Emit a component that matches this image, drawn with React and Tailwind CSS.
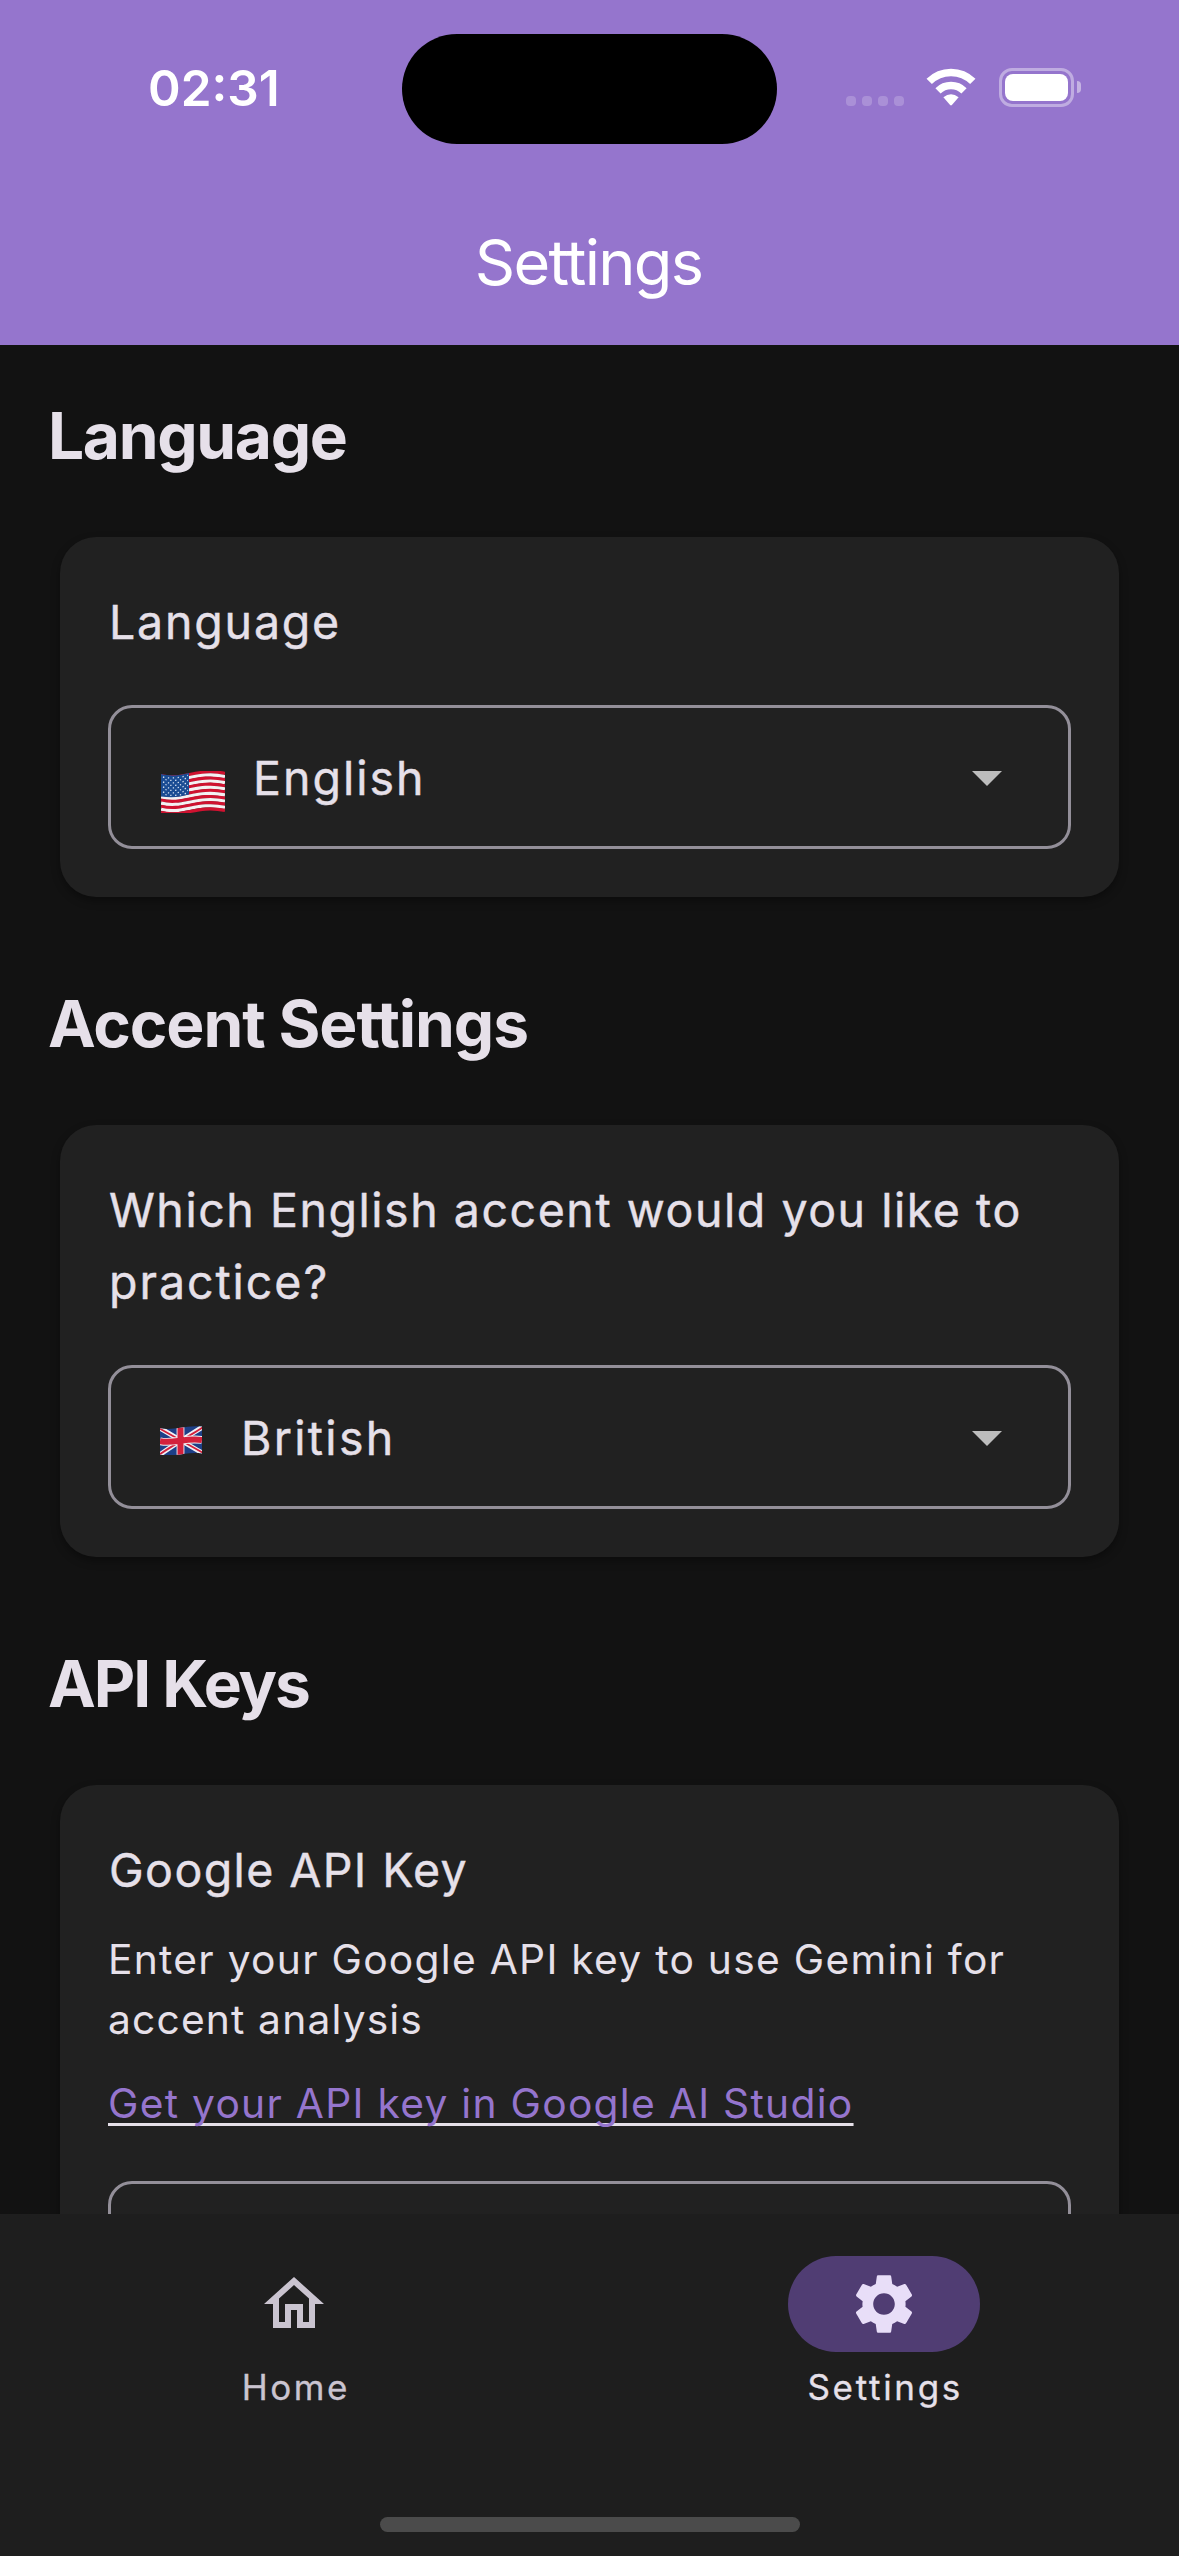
function WifiIcon() {
  return (
    <svg className="h-[38px] w-[52px]" viewBox="0 0 52 38" fill="none">
      <path d="M4.2 13.4A31 31 0 0 1 47.8 13.4" stroke="#fff" strokeWidth="7.6" />
      <path d="M13 22.8A18.5 18.5 0 0 1 39 22.8" stroke="#fff" strokeWidth="7.4" />
      <path d="M18.4 29.2Q26 23.2 33.6 29.2L26.9 37Q26 37.9 25.1 37Z" fill="#fff" />
    </svg>
  );
}

function StatusBar() {
  return (
    <div className="flex h-[177px] items-start">
      <div className="w-[402px] pt-[64px] pl-[148px] text-[49.5px] leading-[48px] font-semibold">02:31</div>
      <div className="mt-[34px] h-[110px] w-[375px] rounded-full bg-black" />
      <div className="mt-[68px] ml-[69px] flex h-[39px]">
        <div className="flex items-end gap-[6px] pb-[1px]">
          {[0, 1, 2, 3].map((n) => (
            <span key={n} className="size-[10px] rounded-[4px] bg-white/20" />
          ))}
        </div>
        <div className="ml-[21px]">
          <WifiIcon />
        </div>
        <div className="ml-[22px] h-[39px] w-[75px] rounded-[13px] border-3 border-white/40 p-[3px]">
          <div className="h-[27px] w-[63px] rounded-[8px] bg-white" />
        </div>
        <div className="mt-[13px] ml-[3px] h-[12px] w-[4px] rounded-r-full bg-white/45" />
      </div>
    </div>
  );
}

const stripes = Array.from({ length: 13 }, (_, i) => 4 + i * 3.08);

function UsFlag() {
  return (
    <svg className="h-[42px] w-[64px]" viewBox="0 0 64 42">
      <g fill="none" strokeWidth="3.3">
        {stripes.map((y, i) => (
          <path
            key={i}
            d={`M0 ${y + 0.5}C22 ${y + 6} 36 ${y - 7.5} 64 ${y - 1.5}`}
            stroke={i % 2 ? "#f3f1f3" : "#cf1230"}
          />
        ))}
      </g>
      <path d="M0 3C11 5.6 19 4.3 28 1.9V23.6C19 26 11 27 0 25.4Z" fill="#1a4c93" />
      <g stroke="#d8e2f2" strokeWidth="1.3" strokeDasharray="1.3 3.6" fill="none">
        {[0, 1, 2, 3, 4, 5, 6, 7].map((r) => (
          <path
            key={r}
            d={`M${r % 2 ? 4.4 : 2} ${6 + r * 2.5}C11 ${8 + r * 2.5} 19 ${6.6 + r * 2.5} 27 ${4.4 + r * 2.5}`}
          />
        ))}
      </g>
    </svg>
  );
}

function UkFlag() {
  return (
    <svg className="h-[29px] w-[42px]" viewBox="0 0 42 29">
      <clipPath id="uk-shape">
        <path d="M0 2.2C14 5 26 -1.6 42 .6V27.4C26 25 14 31.8 0 28.6Z" />
      </clipPath>
      <g clipPath="url(#uk-shape)" fill="none">
        <path d="M0 0H42V29H0Z" fill="#1d3f87" />
        <path d="M-2 1C12 9 30 20 44 28M-2 30C12 20 30 9 44 0" stroke="#f1f1f4" strokeWidth="4.8" />
        <path d="M-2 1.6C12 9.6 30 19.4 44 27.4M-2 29.4C12 20 30 9.4 44 .6" stroke="#d3213c" strokeWidth="1.9" />
        <path d="M0 15.2C14 18 26 11.4 42 14M20.5 0V29" stroke="#f1f1f4" strokeWidth="7.8" />
        <path d="M0 15.2C14 18 26 11.4 42 14M20.5 0V29" stroke="#d3213c" strokeWidth="6" />
      </g>
    </svg>
  );
}

function Select({ children }) {
  return (
    <div className="flex h-36 items-center rounded-3xl border-3 border-[#938f99] pr-[45px]">
      {children}
      <svg className="ml-auto size-[72px]" viewBox="0 0 24 24" fill="#bdbdbd">
        <path d="M7 10l5 5 5-5z" />
      </svg>
    </div>
  );
}

function Section({ title, tracking, children }) {
  return (
    <section className="mb-[84px]">
      <h2 className={`-mb-px pt-px pl-12 text-[64px] leading-[84px] font-bold ${tracking}`}>{title}</h2>
      <div className="mx-[60px] mt-[60px] rounded-[36px] bg-[#212121] p-12 shadow-[0_4px_8px_rgba(0,0,0,0.35)]">
        {children}
      </div>
    </section>
  );
}

export default function App() {
  return (
    <div className="flex h-[2556px] w-[1179px] flex-col overflow-hidden bg-[#121212] font-['Inter',sans-serif] text-[#e6e0e9]">
      <header className="h-[345px] shrink-0 bg-[#9575cd] text-white">
        <StatusBar />
        <h1 className="flex h-[168px] items-center justify-center pt-[2px] pr-[2px] text-[63px] leading-[84px] tracking-[-1.7px]">
          Settings
        </h1>
      </header>

      <main className="h-[1869px] shrink-0 overflow-hidden pt-12">
        <Section title="Language" tracking="tracking-[-1.32px]">
          <p className="-mb-px pt-px pl-px text-[46.5px] leading-[72px] tracking-[1.8px] [-webkit-text-stroke:0.4px]">
            Language
          </p>
          <div className="mt-12">
            <Select>
              <div className="mt-[30px] ml-[50px]">
                <UsFlag />
              </div>
              <span className="mt-[2px] ml-7 text-[46.5px] leading-[72px] tracking-[2px] [-webkit-text-stroke:0.4px]">
                English
              </span>
            </Select>
          </div>
        </Section>

        <Section title="Accent Settings" tracking="tracking-[-1.09px]">
          <p className="-mr-4 -mb-px pt-px pl-px text-[46.5px] leading-[72px] tracking-[1.54px] [-webkit-text-stroke:0.4px]">
            Which English accent would you like to
            <br />
            <span className="tracking-[1.95px]">practice?</span>
          </p>
          <div className="mt-12">
            <Select>
              <div className="mt-[7px] ml-[49px]">
                <UkFlag />
              </div>
              <span className="mt-[2px] ml-[39px] text-[46.5px] leading-[72px] tracking-[2.3px] [-webkit-text-stroke:0.4px]">
                British
              </span>
            </Select>
          </div>
        </Section>

        <Section title="API Keys" tracking="tracking-[-2.04px]">
          <p className="-mb-px pt-px pl-px text-[46.5px] leading-[72px] tracking-[1.4px] [-webkit-text-stroke:0.4px]">
            Google API Key
          </p>
          <p className="-mb-px mt-6 pt-px text-[40.75px] leading-[60px] tracking-[1.27px]">
            Enter your Google API key to use Gemini for
            <br />
            <span className="tracking-[1.15px]">accent analysis</span>
          </p>
          <p className="-mb-px mt-6 pt-px text-[40.75px] leading-[60px] tracking-[1.27px]">
            <a className="text-[#9575cd] underline decoration-[#e6e0e9] decoration-[2.5px] underline-offset-[5px] [text-decoration-skip-ink:none]">
              Get your API key in Google AI Studio
            </a>
          </p>
          <div className="mt-12 h-[168px] rounded-3xl border-3 border-[#938f99]" />
        </Section>
      </main>

      <nav className="flex h-[342px] shrink-0 flex-col bg-[#1e1e1e]">
        <div className="grid grid-cols-2 pt-[42px]">
          <div className="flex flex-col items-center text-[#cac4d0]">
            <div className="flex h-24 w-48 items-center justify-center pr-[2px]">
              <svg className="size-[72px]" viewBox="0 0 24 24" fill="currentColor">
                <path d="M12 5.69l5 4.5V18h-2v-6H9v6H7v-7.81l5-4.5M12 3L2 12h3v8h6v-6h2v6h6v-8h3L12 3z" />
              </svg>
            </div>
            <span className="mt-[11px] pl-[2px] text-[35px] leading-[48px] tracking-[2.5px] [-webkit-text-stroke:0.3px]">
              Home
            </span>
          </div>
          <div className="flex flex-col items-center">
            <div className="flex h-24 w-48 items-center justify-center rounded-full bg-[#503d73]">
              <svg className="size-[72px]" viewBox="0 0 24 24" fill="#e8def8">
                <path d="M19.14 12.94c.04-.3.06-.61.06-.94 0-.32-.02-.64-.07-.94l2.03-1.58c.18-.14.23-.41.12-.61l-1.92-3.32c-.12-.22-.37-.29-.59-.22l-2.39.96c-.5-.38-1.03-.7-1.62-.94l-.36-2.54c-.04-.24-.24-.41-.48-.41h-3.84c-.24 0-.43.17-.47.41l-.36 2.54c-.59.24-1.13.57-1.62.94l-2.39-.96c-.22-.08-.47 0-.59.22L2.74 8.87c-.12.21-.08.47.12.61l2.03 1.58c-.05.3-.09.63-.09.94s.02.64.07.94l-2.03 1.58c-.18.14-.23.41-.12.61l1.92 3.32c.12.22.37.29.59.22l2.39-.96c.5.38 1.03.7 1.62.94l.36 2.54c.05.24.24.41.48.41h3.84c.24 0 .44-.17.47-.41l.36-2.54c.59-.24 1.13-.56 1.62-.94l2.39.96c.22.08.47 0 .59-.22l1.92-3.32c.12-.22.07-.47-.12-.61l-2.01-1.58zM12 15.6c-1.98 0-3.6-1.62-3.6-3.6s1.62-3.6 3.6-3.6 3.6 1.62 3.6 3.6-1.62 3.6-3.6 3.6z" />
              </svg>
            </div>
            <span className="mt-[11px] pl-[2px] text-[35px] leading-[48px] tracking-[2.7px] [-webkit-text-stroke:0.3px]">
              Settings
            </span>
          </div>
        </div>
        <div className="mx-auto mt-auto mb-6 h-[15px] w-[420px] rounded-full bg-[#4b4b4b]" />
      </nav>
    </div>
  );
}
